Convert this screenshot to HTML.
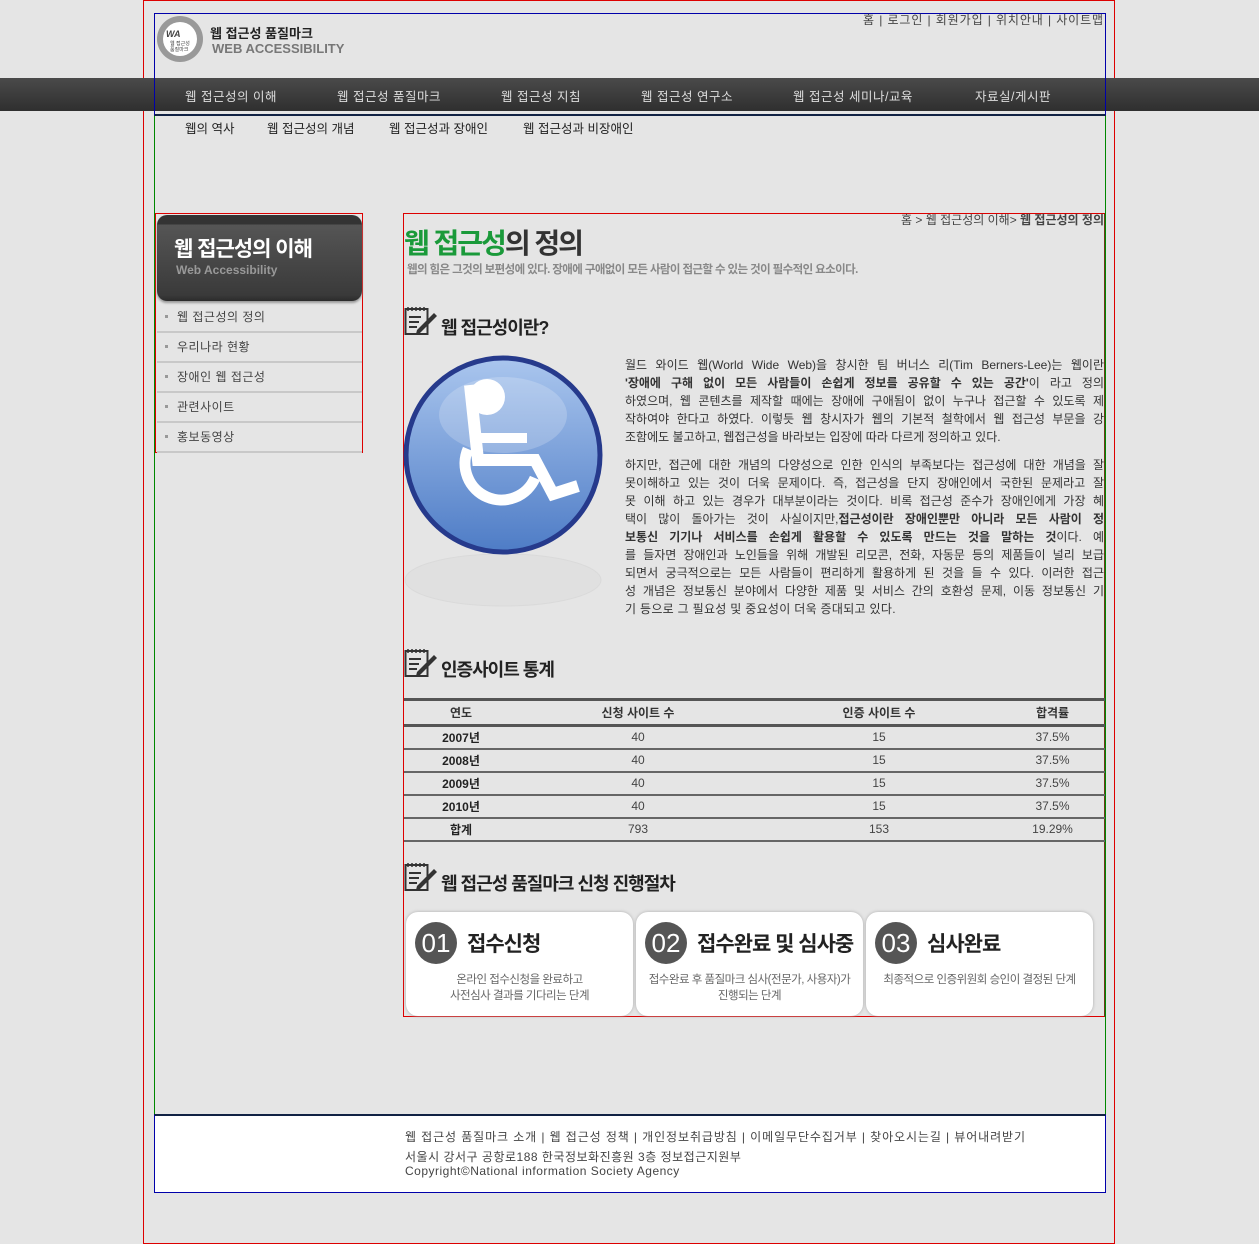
<!DOCTYPE html>
<html><head><meta charset="utf-8">
<style>
*{margin:0;padding:0;box-sizing:border-box}
body{width:1259px;height:1244px;background:#e5e5e5;font-family:"Liberation Sans","Noto Sans CJK KR",sans-serif;color:#333;position:relative;overflow:hidden;font-size:12px}
.a{position:absolute}
.nav{left:0;top:78px;width:1259px;height:33px;background:linear-gradient(#4a4a4a,#2f2f2f)}
.nav span{position:absolute;top:8px;color:#ddd;font-size:12.5px;letter-spacing:.5px}
.sub span{position:absolute;top:118px;font-size:12.5px;color:#222}
.side{left:155px;top:213px;width:208px;height:240px;border:1px solid #d00}
.sidehead{position:absolute;left:1px;top:1px;width:205px;height:86px;border-radius:10px;background:linear-gradient(#333 0,#333 9px,#555 10px,#3a3a3a 80px,#2b2b2b);box-shadow:0 2px 2px #999}
.sideitem{position:absolute;left:1px;width:205px;height:30px;border-bottom:2px solid #c8c8c8;font-size:12px;color:#444;padding:5px 0 0 20px;letter-spacing:.5px}
.sideitem:before{content:"";position:absolute;left:8px;top:12px;width:3px;height:3px;background:#999}
.line{position:absolute;left:625px;width:479px;font-size:12px;line-height:18px;height:18px;white-space:nowrap;text-align:justify;text-align-last:justify;color:#333;overflow:hidden}
.h2{position:absolute;font-size:18px;font-weight:bold;color:#222;letter-spacing:-1px}
table{position:absolute;left:404px;top:698px;width:701px;border-collapse:collapse;font-size:12px}
th{height:26px;border-top:3px solid #555;border-bottom:3px solid #555;font-weight:bold;color:#333}
td{height:23px;border-bottom:2px solid #666;text-align:center;color:#444}
td:first-child{font-weight:bold;color:#222}
.card{position:absolute;top:912px;width:227px;height:104px;background:#fff;border-radius:12px;box-shadow:0 0 3px #aaa}
.num{position:absolute;left:9px;top:10px;width:42px;height:42px;border-radius:50%;background:#555;color:#fff;font-size:26px;text-align:center;line-height:42px}
.ct{position:absolute;left:61px;top:16px;font-size:21px;font-weight:bold;color:#222;letter-spacing:-1px;white-space:nowrap}
.cd{position:absolute;left:0;width:100%;top:60px;text-align:center;font-size:11.5px;color:#666;line-height:16px;letter-spacing:-.5px}
</style></head><body>
<div class="a" style="left:143px;top:0;width:972px;height:1244px;border:1px solid #d00"></div>
<div class="a" style="left:154px;top:115px;width:952px;height:1000px;border-left:1px solid #080;border-right:1px solid #080"></div>
<div class="nav a"><span style="left:185px">웹 접근성의 이해</span><span style="left:337px">웹 접근성 품질마크</span><span style="left:501px">웹 접근성 지침</span><span style="left:641px">웹 접근성 연구소</span><span style="left:793px">웹 접근성 세미나/교육</span><span style="left:975px">자료실/게시판</span></div>
<div class="a" style="left:154px;top:13px;width:952px;height:103px;border:1px solid #00a;border-bottom:2px solid #124"></div>
<svg class="a" style="left:156px;top:15px" width="48" height="48" viewBox="0 0 48 48"><circle cx="24" cy="24" r="23" fill="#999"/><circle cx="24" cy="24" r="17" fill="#fff"/><text x="10" y="22" font-size="9" font-weight="bold" font-style="italic" fill="#444">WA</text><text x="14" y="30" font-size="5" fill="#444">웹 접근성</text><text x="14" y="36" font-size="5" fill="#444">품질마크</text></svg>
<div class="a" style="left:210px;top:23px;font-size:13px;font-weight:bold;color:#222">웹 접근성 품질마크</div>
<div class="a" style="left:212px;top:41px;font-size:13px;font-weight:bold;color:#777">WEB ACCESSIBILITY</div>
<div class="a" style="right:155px;top:11px;font-size:12px;color:#444;white-space:nowrap;letter-spacing:.9px">홈 | 로그인 | 회원가입 | 위치안내 | 사이트맵</div>
<div class="sub"><span style="left:185px">웹의 역사</span><span style="left:267px">웹 접근성의 개념</span><span style="left:389px">웹 접근성과 장애인</span><span style="left:523px">웹 접근성과 비장애인</span></div>

<div class="side a">
<div class="sidehead"><div class="a" style="left:17px;top:18px;font-size:21px;font-weight:bold;color:#fff;letter-spacing:-1px">웹 접근성의 이해</div><div class="a" style="left:19px;top:48px;font-size:12px;font-weight:bold;color:#999">Web Accessibility</div></div>
<div class="sideitem" style="top:89px">웹 접근성의 정의</div>
<div class="sideitem" style="top:119px">우리나라 현황</div>
<div class="sideitem" style="top:149px">장애인 웹 접근성</div>
<div class="sideitem" style="top:179px">관련사이트</div>
<div class="sideitem" style="top:209px">홍보동영상</div>
</div>

<div class="a" style="left:403px;top:213px;width:702px;height:804px;border:1px solid #d00;border-right-color:#6b3a1a"></div>
<div class="a" style="right:155px;top:211px;font-size:12px;color:#444;white-space:nowrap">홈 &gt; 웹 접근성의 이해&gt; <b>웹 접근성의 정의</b></div>
<div class="a" style="left:404px;top:222px;font-size:28px;font-weight:bold;letter-spacing:-2px;color:#333"><span style="color:#1a9a3a">웹 접근성</span>의 정의</div>
<div class="a" style="left:407px;top:261px;font-size:11.5px;font-weight:bold;color:#888;letter-spacing:-.6px">웹의 힘은 그것의 보편성에 있다. 장애에 구애없이 모든 사람이 접근할 수 있는 것이 필수적인 요소이다.</div>

<svg class="a" style="left:404px;top:306px" width="34" height="30" viewBox="0 0 34 30"><rect x="1.5" y="3" width="22" height="25" fill="none" stroke="#333" stroke-width="2"/><path d="M4 1v4M8 1v4M12 1v4M16 1v4M20 1v4" stroke="#333" stroke-width="1.5"/><path d="M5 11h12M5 16h10M5 21h8" stroke="#333" stroke-width="2"/><path d="M13 24l17-17 3 3-17 17-4 1z" fill="#333"/></svg>
<div class="h2" style="left:441px;top:314px">웹 접근성이란?</div>
<svg class="a" style="left:402px;top:355px" width="204" height="256" viewBox="402 355 204 256">
<defs><linearGradient id="g" x1="0" y1="0" x2="0" y2="1"><stop offset="0" stop-color="#aac6ee"/><stop offset="1" stop-color="#4e7cc6"/></linearGradient></defs>
<ellipse cx="503" cy="580" rx="98" ry="26" fill="#e0e0e0" stroke="#dadada"/>
<circle cx="503" cy="455" r="97" fill="url(#g)" stroke="#263a8c" stroke-width="5"/>
<ellipse cx="503" cy="415" rx="64" ry="38" fill="#fff" opacity=".2"/>
<circle cx="487" cy="397" r="18" fill="#fff"/>
<path d="M470 385L478 460H535L553 494L578 486" fill="none" stroke="#fff" stroke-width="12" stroke-linejoin="miter"/>
<path d="M478 438H527" stroke="#fff" stroke-width="10"/>
<path d="M468 449A36 36 0 1 0 535 478" fill="none" stroke="#fff" stroke-width="11"/>
</svg>

<div class="line" style="top:356px">월드 와이드 웹(World Wide Web)을 창시한 팀 버너스 리(Tim Berners-Lee)는 웹이란</div>
<div class="line" style="top:374px"><b>'장애에 구해 없이 모든 사람들이 손쉽게 정보를 공유할 수 있는 공간'</b>이 라고 정의</div>
<div class="line" style="top:392px">하였으며, 웹 콘텐츠를 제작할 때에는 장애에 구애됨이 없이 누구나 접근할 수 있도록 제</div>
<div class="line" style="top:410px">작하여야 한다고 하였다. 이렇듯 웹 창시자가 웹의 기본적 철학에서 웹 접근성 부문을 강</div>
<div class="line" style="top:428px;text-align-last:left">조함에도 불고하고, 웹접근성을 바라보는 입장에 따라 다르게 정의하고 있다.</div>
<div class="line" style="top:456px">하지만, 접근에 대한 개념의 다양성으로 인한 인식의 부족보다는 접근성에 대한 개념을 잘</div>
<div class="line" style="top:474px">못이해하고 있는 것이 더욱 문제이다. 즉, 접근성을 단지 장애인에서 국한된 문제라고 잘</div>
<div class="line" style="top:492px">못 이해 하고 있는 경우가 대부분이라는 것이다. 비록 접근성 준수가 장애인에게 가장 혜</div>
<div class="line" style="top:510px">택이 많이 돌아가는 것이 사실이지만,<b>접근성이란 장애인뿐만 아니라 모든 사람이 정</b></div>
<div class="line" style="top:528px"><b>보통신 기기나 서비스를 손쉽게 활용할 수 있도록 만드는 것을 말하는 것</b>이다. 예</div>
<div class="line" style="top:546px">를 들자면 장애인과 노인들을 위해 개발된 리모콘, 전화, 자동문 등의 제품들이 널리 보급</div>
<div class="line" style="top:564px">되면서 궁극적으로는 모든 사람들이 편리하게 활용하게 된 것을 들 수 있다. 이러한 접근</div>
<div class="line" style="top:582px">성 개념은 정보통신 분야에서 다양한 제품 및 서비스 간의 호환성 문제, 이동 정보통신 기</div>
<div class="line" style="top:600px;text-align-last:left;letter-spacing:.3px">기 등으로 그 필요성 및 중요성이 더욱 증대되고 있다.</div>

<svg class="a" style="left:404px;top:648px" width="34" height="30" viewBox="0 0 34 30"><rect x="1.5" y="3" width="22" height="25" fill="none" stroke="#333" stroke-width="2"/><path d="M4 1v4M8 1v4M12 1v4M16 1v4M20 1v4" stroke="#333" stroke-width="1.5"/><path d="M5 11h12M5 16h10M5 21h8" stroke="#333" stroke-width="2"/><path d="M13 24l17-17 3 3-17 17-4 1z" fill="#333"/></svg>
<div class="h2" style="left:441px;top:656px">인증사이트 통계</div>
<table>
<tr><th style="width:114px">연도</th><th style="width:240px">신청 사이트 수</th><th style="width:242px">인증 사이트 수</th><th>합격률</th></tr>
<tr><td>2007년</td><td>40</td><td>15</td><td>37.5%</td></tr>
<tr><td>2008년</td><td>40</td><td>15</td><td>37.5%</td></tr>
<tr><td>2009년</td><td>40</td><td>15</td><td>37.5%</td></tr>
<tr><td>2010년</td><td>40</td><td>15</td><td>37.5%</td></tr>
<tr><td>합계</td><td>793</td><td>153</td><td>19.29%</td></tr>
</table>

<svg class="a" style="left:404px;top:862px" width="34" height="30" viewBox="0 0 34 30"><rect x="1.5" y="3" width="22" height="25" fill="none" stroke="#333" stroke-width="2"/><path d="M4 1v4M8 1v4M12 1v4M16 1v4M20 1v4" stroke="#333" stroke-width="1.5"/><path d="M5 11h12M5 16h10M5 21h8" stroke="#333" stroke-width="2"/><path d="M13 24l17-17 3 3-17 17-4 1z" fill="#333"/></svg>
<div class="h2" style="left:441px;top:870px">웹 접근성 품질마크 신청 진행절차</div>
<div class="card" style="left:406px"><div class="num">01</div><div class="ct">접수신청</div><div class="cd">온라인 접수신청을 완료하고<br>사전심사 결과를 기다리는 단계</div></div>
<div class="card" style="left:636px"><div class="num">02</div><div class="ct">접수완료 및 심사중</div><div class="cd">접수완료 후 품질마크 심사(전문가, 사용자)가<br>진행되는 단계</div></div>
<div class="card" style="left:866px"><div class="num">03</div><div class="ct">심사완료</div><div class="cd">최종적으로 인증위원회 승인이 결정된 단계</div></div>

<div class="a" style="left:154px;top:1114px;width:952px;height:79px;background:#fff;border:1px solid #00a;border-top:2px solid #124"></div>
<div class="a" style="left:405px;top:1128px;font-size:12px;color:#444;white-space:nowrap;letter-spacing:.9px">웹 접근성 품질마크 소개 | 웹 접근성 정책 | 개인정보취급방침 | 이메일무단수집거부 | 찾아오시는길 | 뷰어내려받기</div>
<div class="a" style="left:405px;top:1150px;font-size:12px;color:#444;white-space:nowrap;line-height:14px;letter-spacing:.5px">서울시 강서구 공항로188 한국정보화진흥원 3층 정보접근지원부<br>Copyright©National information Society Agency</div>
</body></html>
